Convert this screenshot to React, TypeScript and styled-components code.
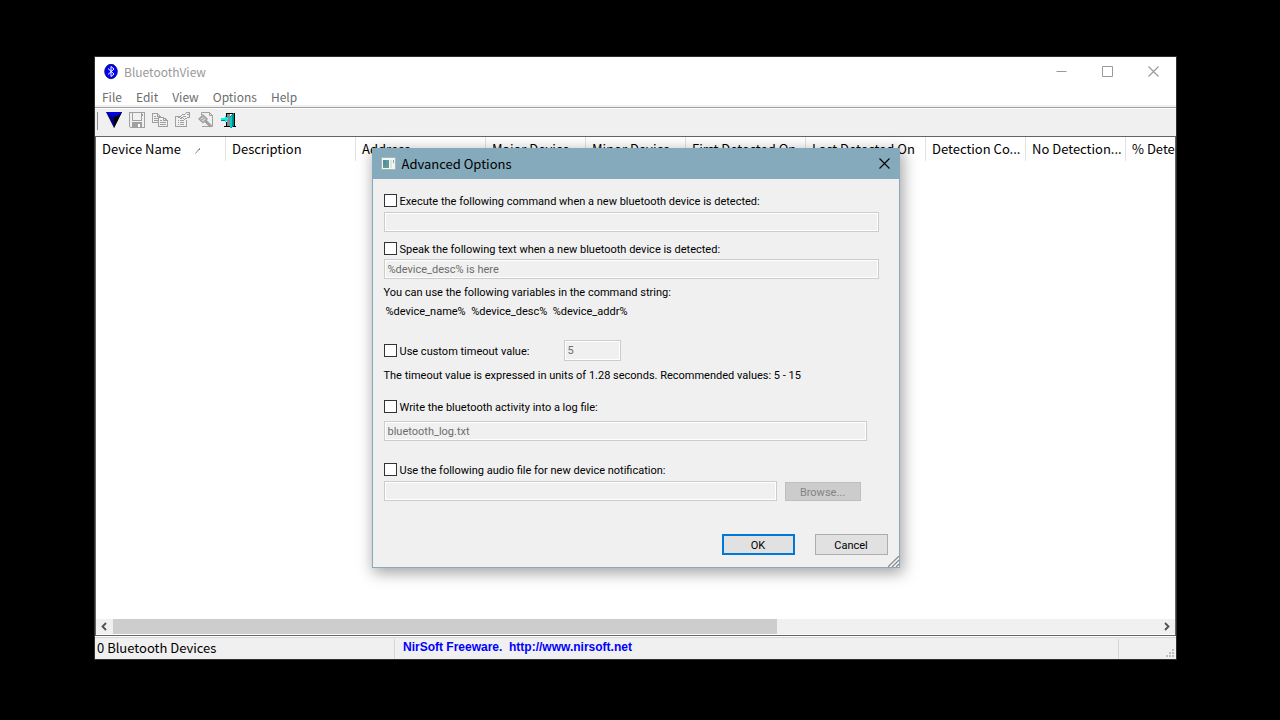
import React from "react";
import styled, { createGlobalStyle } from "styled-components";

const uiFont = `"Noto Sans CJK SC", "Noto Sans", sans-serif`;
const dialogFont = `Roboto, "Noto Sans", sans-serif`;

const GlobalStyle = createGlobalStyle`
  *, *::before, *::after { box-sizing: border-box; }
  body { margin: 0; background: #000; font-family: ${uiFont}; font-size: 13px; color: #000; }
  button, input { font: inherit; color: inherit; margin: 0; }
`;

const Desktop = styled.main`
  min-height: 100vh;
  display: flex;
  padding: 56px 103px 60px 94px;
`;

const AppWindow = styled.section`
  position: relative;
  flex: 1;
  min-width: 0;
  display: flex;
  flex-direction: column;
  background: #f0f0f0;
  border: 1px solid #2e2e2e;
`;

const TitleBar = styled.header`
  display: flex;
  align-items: center;
  height: 29px;
  padding-left: 9px;
  gap: 6px;
  background: #fff;
  color: #999;
`;

const WindowTitle = styled.h1`
  flex: 1;
  margin: 0;
  font-size: 12px;
  font-weight: 400;
  line-height: 20px;
`;

const CaptionButtons = styled.div`
  display: flex;
  gap: 1px;
  height: 100%;
`;

const CaptionButton = styled.button<{ $width: number }>`
  display: flex;
  align-items: center;
  justify-content: center;
  width: ${(p) => p.$width}px;
  padding: 0;
  border: 0;
  background: transparent;
`;

const MenuBar = styled.nav`
  display: flex;
  height: 19px;
  background: #fff;
`;

const MenuItem = styled.button`
  padding: 2px 7px 0;
  border: 0;
  background: transparent;
  color: #6d6d6d;
  font-size: 12px;
  line-height: 17px;
`;

const ToolBar = styled.div`
  display: flex;
  align-items: flex-start;
  gap: 7px;
  height: 30px;
  margin-top: 2px;
  padding: 4px 2px 0;
  border-top: 1px solid #a0a0a0;
  border-bottom: 1px solid #646464;
  box-shadow: inset 0 1px 0 #fff;
`;

const ToolGrip = styled.span`
  width: 1px;
  height: 18px;
  margin-right: 1px;
  background: #8c8c8c;
`;

const ToolButton = styled.button`
  display: flex;
  padding: 0;
  border: 0;
  background: transparent;
`;

const ListView = styled.div`
  flex: 1;
  display: flex;
  flex-direction: column;
  min-height: 0;
  border: solid #646464;
  border-width: 0 1px 1px;
  background: #fff;
`;

const ListBody = styled.div`
  flex: 1;
  overflow: hidden;
`;

const DeviceTable = styled.table`
  table-layout: fixed;
  width: 0;
  border-collapse: separate;
  border-spacing: 0;
`;

const HeaderCell = styled.th<{ $width: number }>`
  width: ${(p) => p.$width}px;
  height: 24px;
  padding: 0 6px;
  border-right: 1px solid #e2e2e2;
  font-weight: 400;
  line-height: 24px;
  text-align: left;
  white-space: nowrap;
`;

const SortMark = styled.svg`
  margin-left: 14px;
`;

const ScrollBar = styled.div`
  display: flex;
  height: 15px;
  margin-bottom: 1px;
  background: #f0f0f0;
`;

const ScrollButton = styled.button`
  display: flex;
  align-items: center;
  justify-content: center;
  width: 17px;
  padding: 0;
  border: 0;
  background: transparent;
`;

const ScrollTrack = styled.div`
  flex: 1;
`;

const ScrollThumb = styled.div`
  width: 63.5%;
  height: 100%;
  background: #cdcdcd;
`;

const StatusBar = styled.footer`
  display: flex;
  height: 23px;
  border-top: 1px solid #fff;
  box-shadow: inset 0 1px 0 #d7d7d7;
`;

const StatusPane = styled.div<{ $width?: number }>`
  ${(p) => (p.$width ? `width: ${p.$width}px;` : "flex: 1;")}
  margin-top: 2px;
  padding: 0 2px;
  border-right: 1px solid #d7d7d7;
  line-height: 17px;
`;

const StatusLink = styled.a`
  display: block;
  padding-left: 6px;
  color: #0000ff;
  font: bold 12px/17px "Liberation Sans", Arial, sans-serif;
  text-decoration: none;
  white-space: pre;
`;

const GripPane = styled.div`
  display: flex;
  align-items: flex-end;
  justify-content: flex-end;
  width: 57px;
  padding: 2px;
`;

const DialogLayer = styled.div`
  position: absolute;
  inset: 0;
  display: flex;
  align-items: center;
  justify-content: center;
`;

const DialogBox = styled.section`
  position: relative;
  width: 528px;
  border: 1px solid #84aabb;
  border-top: 0;
  background: #f0f0f0;
  box-shadow: 2px 4px 14px 1px rgba(0, 0, 0, 0.36);
  font-family: ${dialogFont};
  font-size: 11px;
`;

const DialogTitleBar = styled.header`
  display: flex;
  align-items: center;
  height: 31px;
  padding-left: 8px;
  gap: 6px;
  background: #84aabb;
`;

const DialogTitle = styled.h2`
  flex: 1;
  margin: 0;
  font: 400 13px/20px ${uiFont};
`;

const DialogForm = styled.form`
  display: flex;
  flex-direction: column;
  padding: 13px 11px 12px;
  line-height: 17px;
`;

const Line = styled.div<{ $top?: number }>`
  display: flex;
  align-items: center;
  margin-top: ${(p) => p.$top ?? 0}px;
`;

const CheckLabel = styled.label`
  display: flex;
  align-items: center;
  gap: 3px;
  height: 17px;
  line-height: 15px;
`;

const CheckText = styled.span`
  padding-top: 2px;
`;

const CheckBox = styled.input`
  appearance: none;
  width: 13px;
  height: 13px;
  border: 1px solid #333;
  background: #fff;
`;

const TimeoutLabel = styled(CheckLabel)`
  width: 180px;
`;

const TextField = styled.input<{ $width: number; $height?: number }>`
  width: ${(p) => p.$width}px;
  height: ${(p) => p.$height ?? 20}px;
  padding: 0 3px;
  border: 1px solid #ccc;
  outline: 1px solid #fff;
  outline-offset: -2px;
  background: #f0f0f0;
  color: #6d6d6d;
`;

const Note = styled.p<{ $top: number; $indent?: number }>`
  margin: ${(p) => p.$top}px 0 0 ${(p) => p.$indent ?? 0}px;
  white-space: pre;
`;

const PushButton = styled.button<{ $width: number; $kind?: "default" | "disabled" }>`
  width: ${(p) => p.$width}px;
  height: ${(p) => (p.$kind === "disabled" ? 19 : 21)}px;
  padding: 2px 0 0;
  border: ${(p) =>
    p.$kind === "default" ? "2px solid #0078d7" : p.$kind === "disabled" ? "1px solid #bfbfbf" : "1px solid #adadad"};
  background: ${(p) => (p.$kind === "disabled" ? "#ccc" : "#e1e1e1")};
  color: ${(p) => (p.$kind === "disabled" ? "#838383" : "#000")};
  line-height: 15px;
`;

const FileRow = styled(Line)`
  align-items: flex-end;
  gap: 8px;
`;

const DialogActions = styled.div`
  display: flex;
  justify-content: flex-end;
  gap: 20px;
  margin-top: 33px;
`;

const DialogGrip = styled.svg`
  position: absolute;
  right: 0;
  bottom: 0;
`;

const BluetoothLogo = () => (
  <svg width="14" height="16" viewBox="0 0 14 16" aria-hidden="true">
    <ellipse cx="7" cy="7.5" rx="6.3" ry="7.2" fill="#0000ff" stroke="#000050" strokeWidth=".8" />
    <path d="M4 4.5 L10 10 L7 12.5 V2.5 L10 5 L4 10.5" fill="none" stroke="#fff" />
  </svg>
);

const CloseGlyph = ({ color }: { color: string }) => (
  <svg width="11" height="11" viewBox="0 0 11 11" aria-hidden="true">
    <path d="M.5 .5 L10.5 10.5 M10.5 .5 L.5 10.5" fill="none" stroke={color} strokeWidth="1.1" />
  </svg>
);

const MinimizeGlyph = () => (
  <svg width="11" height="11" viewBox="0 0 11 11" aria-hidden="true">
    <path d="M.5 5.5 H10.5" stroke="#999" />
  </svg>
);

const MaximizeGlyph = () => (
  <svg width="11" height="11" viewBox="0 0 11 11" aria-hidden="true">
    <path d="M.5 .5 H10.5 V10.5 H.5 Z" fill="none" stroke="#999" />
  </svg>
);

const gray = "#a0a0a0";

const FilterIcon = () => (
  <svg width="16" height="16" viewBox="0 0 16 16" aria-hidden="true">
    <path d="M0 0 H16 L8 16 Z" fill="#000080" />
    <path d="M0 0 H16 L14 3 L8 5 L2 2 Z" fill="#0000e0" />
    <path d="M16 0 L8 16 V5 L13 3 Z" fill="#000" />
  </svg>
);

const SaveIcon = () => (
  <svg width="16" height="16" viewBox="0 0 16 16" shapeRendering="crispEdges" aria-hidden="true">
    <path d="M.5 .5 H15.5 V15.5 H1.5 L.5 14.5 Z" fill="none" stroke={gray} />
    <path d="M3.5 .5 V8.5 H12.5 V.5 M13.5 2 V4" fill="none" stroke={gray} />
    <path d="M3 10 H13 V16 H3 Z" fill={gray} />
    <path d="M9 12 H11 V15 H9 Z" fill="#fff" />
  </svg>
);

const CopyIcon = () => (
  <svg width="16" height="16" viewBox="0 0 16 16" shapeRendering="crispEdges" aria-hidden="true">
    <path d="M.5 1.5 H5.5 L8.5 4.5 V10.5 H.5 Z" fill="#f0f0f0" stroke={gray} />
    <path d="M2 4.5 H4 M2 6.5 H6 M2 8.5 H6 M5.5 1.5 V4.5 H8" fill="none" stroke={gray} />
    <path d="M6.5 5.5 H11.5 L15.5 8.5 V14.5 H6.5 Z" fill="#f0f0f0" stroke={gray} />
    <path d="M8 8.5 H10 M8 10.5 H14 M8 12.5 H14 M11.5 5.5 V8.5 H15" fill="none" stroke={gray} />
  </svg>
);

const PropertiesIcon = () => (
  <svg width="16" height="16" viewBox="0 0 16 16" shapeRendering="crispEdges" aria-hidden="true">
    <path d="M6 4.5 H.5 V14.5 H11.5 V8" fill="none" stroke={gray} />
    <path d="M3 8.5 H4 M5 8.5 H9 M3 10.5 H4 M5 10.5 H9 M3 12.5 H4 M5 12.5 H9" stroke={gray} />
    <path d="M4 5.5 L7.5 2.5 H9.5 L11.5 .5 H14.5 V5.5 H12.5 L9.5 7.5 L7.5 5.5 L5.5 6.5 Z" fill="#f0f0f0" stroke={gray} />
    <path d="M8 4.5 H11 M12 2.5 H15" stroke={gray} />
  </svg>
);

const FindIcon = () => (
  <svg width="16" height="16" viewBox="0 0 16 16" aria-hidden="true">
    <path d="M3.5 3 V.5 H11.5 L14.5 3.5 V14.5 H4 M11.5 .5 V3.5 H14.5" fill="none" stroke={gray} />
    <path d="M5 3 L9 7 L5 10.5 L1 7 Z" fill="#dcdcdc" stroke={gray} strokeWidth="1.4" />
    <path d="M2.5 6 L6.5 4.5 M3 8 L7.5 6" stroke={gray} />
    <path d="M7 8.5 L13 14.5" stroke={gray} strokeWidth="3" />
  </svg>
);

const ExitIcon = () => (
  <svg width="16" height="16" viewBox="0 0 16 16" shapeRendering="crispEdges" aria-hidden="true">
    <path d="M5 1 H14 V14 H15 V15 H12 V2 H6 V5 H5 Z" fill="#000" />
    <path d="M6 2 H9 V14 H6 Z" fill="#8c8c8c" />
    <path d="M5 10 H6 V14 H9 V15 H3 V14 H5 Z" fill="#000" />
    <path d="M9 4 L13 1 V14 L10 16 H9 Z" fill="#008c8c" />
    <path d="M9 5 L11 3 V15 L9 16 Z" fill="#00d0d0" />
    <path d="M0 6 H4 V4 H5 V5 H6 V6 H7 V8 H6 V9 H5 V10 H4 V8 H0 Z" fill="#00f0f0" />
    <path d="M0 8 H4 V9 H0 Z" fill="#008080" />
  </svg>
);

const tools = [
  { name: "Stop Bluetooth Detection", Icon: FilterIcon },
  { name: "Save", Icon: SaveIcon },
  { name: "Copy", Icon: CopyIcon },
  { name: "Properties", Icon: PropertiesIcon },
  { name: "Find", Icon: FindIcon },
  { name: "Exit", Icon: ExitIcon },
];

const columns: [string, number][] = [
  ["Device Name", 130],
  ["Description", 130],
  ["Address", 130],
  ["Major Device", 100],
  ["Minor Device", 100],
  ["First Detected On", 120],
  ["Last Detected On", 120],
  ["Detection Co...", 100],
  ["No Detection...", 100],
  ["% Detection", 100],
];

export default function App() {
  return (
    <Desktop>
      <GlobalStyle />
      <AppWindow aria-label="BluetoothView">
        <TitleBar>
          <BluetoothLogo />
          <WindowTitle>BluetoothView</WindowTitle>
          <CaptionButtons>
            <CaptionButton $width={45} aria-label="Minimize"><MinimizeGlyph /></CaptionButton>
            <CaptionButton $width={45} aria-label="Maximize"><MaximizeGlyph /></CaptionButton>
            <CaptionButton $width={45} aria-label="Close window"><CloseGlyph color="#999" /></CaptionButton>
          </CaptionButtons>
        </TitleBar>
        <MenuBar>
          {["File", "Edit", "View", "Options", "Help"].map((m) => (
            <MenuItem key={m}>{m}</MenuItem>
          ))}
        </MenuBar>
        <ToolBar>
          <ToolGrip />
          {tools.map(({ name, Icon }) => (
            <ToolButton key={name} aria-label={name}><Icon /></ToolButton>
          ))}
        </ToolBar>
        <ListView>
          <ListBody>
            <DeviceTable>
              <thead>
                <tr>
                  {columns.map(([name, width], i) => (
                    <HeaderCell key={name} $width={width} scope="col">
                      {name}
                      {i === 0 && (
                        <SortMark width="5" height="6" viewBox="0 0 5 6" aria-hidden="true">
                          <path d="M.5 5.5 L4.5 .5 V2" fill="none" stroke="#888" />
                        </SortMark>
                      )}
                    </HeaderCell>
                  ))}
                </tr>
              </thead>
            </DeviceTable>
          </ListBody>
          <ScrollBar>
            <ScrollButton aria-label="Scroll left">
              <svg width="9" height="9" viewBox="0 0 9 9" aria-hidden="true">
                <path d="M6 1 L2.5 4.5 L6 8" fill="none" stroke="#505050" strokeWidth="1.8" />
              </svg>
            </ScrollButton>
            <ScrollTrack><ScrollThumb /></ScrollTrack>
            <ScrollButton aria-label="Scroll right">
              <svg width="9" height="9" viewBox="0 0 9 9" aria-hidden="true">
                <path d="M3 1 L6.5 4.5 L3 8" fill="none" stroke="#505050" strokeWidth="1.8" />
              </svg>
            </ScrollButton>
          </ScrollBar>
        </ListView>
        <StatusBar>
          <StatusPane $width={300}>0 Bluetooth Devices</StatusPane>
          <StatusPane>
            <StatusLink href="http://www.nirsoft.net">{"NirSoft Freeware.  http://www.nirsoft.net"}</StatusLink>
          </StatusPane>
          <GripPane>
            <svg width="8" height="8" viewBox="0 0 8 8" fill="#bfbfbf" aria-hidden="true">
              <path d="M6 0h2v2h-2z M3 3h2v2h-2z M6 3h2v2h-2z M0 6h2v2h-2z M3 6h2v2h-2z M6 6h2v2h-2z" />
            </svg>
          </GripPane>
        </StatusBar>

        <DialogLayer>
          <DialogBox role="dialog" aria-label="Advanced Options">
            <DialogTitleBar>
              <svg width="15" height="13" viewBox="0 0 15 13" aria-hidden="true">
                <path d="M.5 .5 H14.5 V12.5 H.5 Z" fill="#f4f6f6" stroke="#a9b4ba" />
                <path d="M2 3 H8 V11 H2 Z" fill="#57a08c" />
                <path d="M2 3 H5 V8 H2 Z" fill="#5a86a8" />
                <path d="M9 3 H11 V11 H9 Z" fill="#dfe4e6" />
                <path d="M12 3 H13 V6 H12 Z" fill="#70b490" />
              </svg>
              <DialogTitle>Advanced Options</DialogTitle>
              <CaptionButton type="button" $width={29} aria-label="Close dialog"><CloseGlyph color="#000" /></CaptionButton>
            </DialogTitleBar>
            <DialogForm onSubmit={(e) => e.preventDefault()}>
              <CheckLabel>
                <CheckBox type="checkbox" />
                <CheckText>Execute the following command when a new bluetooth device is detected:</CheckText>
              </CheckLabel>
              <Line $top={3}><TextField $width={495} disabled aria-label="Command" /></Line>
              <Line $top={8}>
                <CheckLabel>
                  <CheckBox type="checkbox" />
                  <CheckText>Speak the following text when a new bluetooth device is detected:</CheckText>
                </CheckLabel>
              </Line>
              <Line $top={2}>
                <TextField $width={495} disabled aria-label="Text to speak" defaultValue="%device_desc% is here" />
              </Line>
              <Note $top={5}>You can use the following variables in the command string:</Note>
              <Note $top={2} $indent={2}>{"%device_name%  %device_desc%  %device_addr%"}</Note>
              <Line $top={20}>
                <TimeoutLabel>
                  <CheckBox type="checkbox" />
                  <CheckText>Use custom timeout value:</CheckText>
                </TimeoutLabel>
                <TextField $width={57} $height={21} disabled aria-label="Timeout value" defaultValue="5" />
              </Line>
              <Note $top={6}>The timeout value is expressed in units of 1.28 seconds. Recommended values: 5 - 15</Note>
              <Line $top={14}>
                <CheckLabel>
                  <CheckBox type="checkbox" />
                  <CheckText>Write the bluetooth activity into a log file:</CheckText>
                </CheckLabel>
              </Line>
              <Line $top={6}>
                <TextField $width={483} disabled aria-label="Log file" defaultValue="bluetooth_log.txt" />
              </Line>
              <Line $top={20}>
                <CheckLabel>
                  <CheckBox type="checkbox" />
                  <CheckText>Use the following audio file for new device notification:</CheckText>
                </CheckLabel>
              </Line>
              <FileRow $top={3}>
                <TextField $width={393} disabled aria-label="Audio file" />
                <PushButton type="button" $width={76} $kind="disabled" disabled>Browse...</PushButton>
              </FileRow>
              <DialogActions>
                <PushButton type="submit" $width={73} $kind="default">OK</PushButton>
                <PushButton type="button" $width={73}>Cancel</PushButton>
              </DialogActions>
            </DialogForm>
            <DialogGrip width="11" height="11" viewBox="0 0 11 11" aria-hidden="true">
              <path d="M1 12 L12 1 M5 12 L12 5 M9 12 L12 9" stroke="#fff" />
              <path d="M0 11 L11 0 M4 11 L11 4 M8 11 L11 8" stroke="#8c8c8c" strokeWidth="1.3" />
            </DialogGrip>
          </DialogBox>
        </DialogLayer>
      </AppWindow>
    </Desktop>
  );
}
